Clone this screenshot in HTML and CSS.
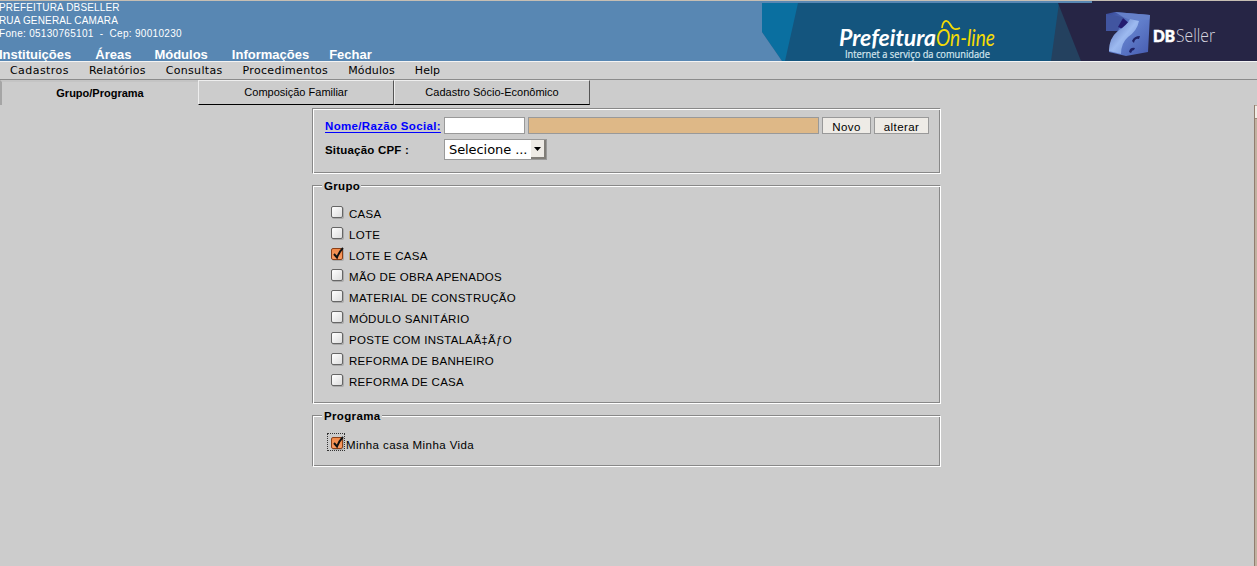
FILE: index.html
```html
<!DOCTYPE html>
<html lang="pt-BR">
<head>
<meta charset="utf-8">
<title>Prefeitura On-line</title>
<link rel="stylesheet" href="styles.css">
</head>
<body>
<header class="top">
  <div class="top-left">
    <div class="org"><span class="org-a">PREFEITURA DBSELLER</span><br><span class="org-b">RUA GENERAL CAMARA</span><br><span class="org-c">Fone: 05130765101 &nbsp;- &nbsp;Cep: 90010230</span></div>
    <nav class="main-nav"><a>Instituições</a><a class="areas">Áreas</a><a>Módulos</a><a>Informações</a><a class="fechar">Fechar</a></nav>
  </div>
  <svg class="banner" width="495" height="60" viewBox="762 1 495 60">
    <defs>
      <linearGradient id="cube" x1="0" y1="0" x2="1" y2="1"><stop offset="0" stop-color="#354596"/><stop offset=".45" stop-color="#6482ce"/><stop offset="1" stop-color="#465bb0"/></linearGradient>
      <linearGradient id="ribbon" x1="0" y1="0" x2="1" y2="1"><stop offset="0" stop-color="#5269b4"/><stop offset=".5" stop-color="#9dbaf0"/><stop offset="1" stop-color="#6f8cd4"/></linearGradient>
    </defs>
    <rect x="762" y="1" width="495" height="60" fill="#14557e"/>
    <path d="M762 3H798L785 61H782L762 32Z" fill="#0a6fa0"/>
    <path d="M762 32L782 61H762Z" fill="#5887b3"/>
    <path d="M1059 3L1051 61H1082V3Z" fill="#24415f"/>
    <path d="M1058 3H1257V61H1081Z" fill="#262545"/>
    <rect x="762" y="1" width="330" height="2" fill="#5887b3"/>
    <rect x="1092" y="1" width="165" height="2" fill="#262545"/>
    <text class="pref" x="839" y="46" textLength="97" lengthAdjust="spacingAndGlyphs">Prefeitura</text>
    <text class="online" x="936" y="46" textLength="59" lengthAdjust="spacingAndGlyphs">On-line</text>
    <path d="M942 28C943 20 947 19 950 24C953 30 956 30 960 28" fill="none" stroke="#f5dc05" stroke-width="1.7"/>
    <text class="slogan" x="845" y="58" textLength="145" lengthAdjust="spacingAndGlyphs">Internet a serviço da comunidade</text>
    <path d="M1106 14L1115 12L1150 15L1148 52L1126 56L1109 52Q1110 38 1118 31H1106Z" fill="url(#cube)"/>
    <path d="M1106 14L1123 17L1118 31H1106Z" fill="#4155a0"/>
    <path d="M1115 12L1150 15L1149 20L1128 19L1123 17Z" fill="#6580c9"/>
    <path d="M1123 18L1130 24L1125 30L1118 27Z" fill="#241c70"/>
    <path d="M1118 31Q1128 24 1130 19L1139 21Q1137 31 1128 37Q1121 43 1121 54L1109 51Q1109 38 1118 31Z" fill="url(#ribbon)"/>
    <path d="M1132 41Q1134 36 1140 36L1139 39Q1135 38 1134 43ZM1129 52Q1130 47 1135 48L1134 50Q1132 50 1131 53Z" fill="#202367"/>
    <text class="db" x="1153" y="42" textLength="22" lengthAdjust="spacingAndGlyphs">DB</text>
    <text class="seller" x="1176" y="42" textLength="39" lengthAdjust="spacingAndGlyphs">Seller</text>
  </svg>
</header>
<nav class="menu"><a class="m1">Cadastros</a><a class="m2">Relatórios</a><a class="m3">Consultas</a><a class="m4">Procedimentos</a><a class="m5">Módulos</a><a>Help</a></nav>
<div class="tabs">
  <div class="tab active"><span>Grupo/Programa</span></div>
  <div class="tab"><span>Composição Familiar</span></div>
  <div class="tab"><span>Cadastro Sócio-Econômico</span></div>
</div>
<div class="scroll"><i></i></div>
<main class="form">
  <section class="box person">
    <div class="line"><a class="lbl link"><span>Nome/Razão Social:</span></a><input class="code"><input class="name"><button class="btn novo">Novo</button><button class="btn alterar">alterar</button></div>
    <div class="line second"><span class="lbl cpf"><span>Situação CPF :</span></span><div class="select"><span>Selecione ...</span><b><svg width="7" height="4" viewBox="0 0 7 4"><path d="M0 0H7L3.5 4Z"/></svg></b></div></div>
  </section>
  <section class="box grupo">
    <h2 class="title">Grupo</h2>
    <label class="row"><i class="chk"></i><span>CASA</span></label>
    <label class="row"><i class="chk"></i><span>LOTE</span></label>
    <label class="row"><i class="chk on"><svg width="13" height="14" viewBox="0 0 13 14"><path d="M3 7L6 10.500Q8 5 12 1"/></svg></i><span>LOTE E CASA</span></label>
    <label class="row"><i class="chk"></i><span>MÃO DE OBRA APENADOS</span></label>
    <label class="row"><i class="chk"></i><span>MATERIAL DE CONSTRUÇÃO</span></label>
    <label class="row"><i class="chk"></i><span>MÓDULO SANITÁRIO</span></label>
    <label class="row"><i class="chk"></i><span>POSTE COM INSTALAÃ‡ÃƒO</span></label>
    <label class="row"><i class="chk"></i><span>REFORMA DE BANHEIRO</span></label>
    <label class="row"><i class="chk"></i><span>REFORMA DE CASA</span></label>
  </section>
  <section class="box programa">
    <h2 class="title">Programa</h2>
    <label class="row vida"><em><i class="chk on"><svg width="13" height="14" viewBox="0 0 13 14"><path d="M3 7L6 10.500Q8 5 12 1"/></svg></i></em><span>Minha casa Minha Vida</span></label>
  </section>
</main>
</body>
</html>
```
FILE: styles.css
```css
* { box-sizing: border-box; }
body { margin: 0; height: 566px; overflow: hidden; background: #ccc; color: #000; font: 11px/13px "Liberation Sans", Arial, sans-serif; position: relative; }
.top { height: 62px; display: flex; justify-content: space-between; background: #5887b3; border-top: 1px solid #c6beb3; border-bottom: 1px solid #f4f4f4; color: #fff; }
.top-left { margin-left: -1px; }
.org { height: 39px; font-size: 10px; line-height: 13px; white-space: nowrap; letter-spacing: .15px; }
.org-c { letter-spacing: .3px; }
.main-nav { display: flex; gap: 24px; margin-top: 7px; font-size: 13px; line-height: 16px; font-weight: bold; }
.areas { margin-right: -1px; }
.fechar { margin-left: -4px; }
.banner { display: block; flex: none; }
.pref { font: italic bold 23px Lato, sans-serif; fill: #fff; }
.online { font: italic 23px Lato, sans-serif; fill: #f5dc05; }
.slogan { font: 10px "Open Sans", sans-serif; fill: #d8e8f0; stroke: #d8e8f0; stroke-width: .2px; }
.db { font: 900 17px Lato, sans-serif; fill: #fff; stroke: #fff; stroke-width: .6px; }
.seller { font: 300 18px "Open Sans", sans-serif; fill: #d5d4df; }
.menu { height: 18px; display: flex; gap: 20px; padding-left: 10px; background: #d0d0d0; border-bottom: 1px solid #8b8b8b; font: 11px/18px "DejaVu Sans", sans-serif; }
.m1 { letter-spacing: .44px; }
.m2 { letter-spacing: .2px; }
.m3 { letter-spacing: .33px; }
.m4 { letter-spacing: .31px; }
.m5 { letter-spacing: .14px; }
.tabs { height: 25px; display: flex; }
.tab { width: 196px; height: 25px; border: solid; border-width: 1px 1px 1px 1px; border-color: #eee #555 #000 #eee; text-align: center; line-height: 22px; }
.tab.active { width: 198px; border-color: #c4c4c4 #ccc #ccc #a5a5a5; border-width: 2px 0 0 2px; font-weight: bold; }
.scroll { position: absolute; right: 0; top: 105px; width: 3px; height: 461px; background: #c1b1a0; border-left: 1px solid #917e70; }
.scroll i { display: block; height: 14px; background: #f0ece5; border-bottom: 1px solid #9b8877; border-top: 1px solid #b8a898; }
.form { width: 629px; margin: 3px 0 0 312px; font-size: 11.5px; }
.box { position: relative; border: 1px solid #888; border-right-color: #fff; border-bottom-color: #fff; box-shadow: inset 1px 1px #fff, inset -1px -1px #888; }
.person { height: 66px; padding: 8px 0 0 12px; }
.line { display: flex; height: 17px; }
.second { height: 21px; margin-top: 5px; }
.lbl { width: 119px; font-weight: bold; white-space: nowrap; }
.link { color: #00f; line-height: 18px; letter-spacing: .33px; }
.link span { text-decoration: underline; text-underline-offset: 2px; }
.cpf { line-height: 22px; letter-spacing: .2px; }
.code, .name { border: 1px solid #999; height: 17px; padding: 0; border-radius: 0; background: #fff; width: 81px; margin: 0 3px 0 0; }
.name { background: #deb887; width: 291px; }
.btn { height: 17px; border: 1px solid #999; background: #eeebe6; padding: 3px 0 0; font: inherit; width: 49px; margin: 0 3px 0 0; line-height: 13px; letter-spacing: .4px; }
.alterar { width: 55px; }
.select { width: 103px; height: 21px; border: 1px solid #999; background: #fff; display: flex; justify-content: space-between; padding: 0 0 0 4px; font: 13px/19px "DejaVu Sans", sans-serif; letter-spacing: -.08px; }
.select b { width: 15px; background: #eeebe6; border: solid #817e79; border-width: 0 2px 2px 0; display: flex; align-items: center; justify-content: center; }
.grupo { height: 219px; margin-top: 11px; padding: 18px 0 0 18px; }
.title { position: absolute; left: 9px; top: -6px; margin: 0; padding: 0 1px 0 2px; background: #ccc; font-size: 11.5px; line-height: 13px; letter-spacing: .35px; }
.row { display: flex; height: 21px; align-items: flex-start; line-height: 13px; white-space: nowrap; padding-top: 2px; letter-spacing: .3px; }
.row span { margin-top: 2px; }
.chk { display: block; width: 12px; height: 12px; flex: none; margin-right: 6px; border: 1px solid #666; border-radius: 2px; background: linear-gradient(135deg, #fff, #ddd); box-shadow: 1px 1px #aaa; }
.on { background: linear-gradient(#f08a49, #fa9c63); border-color: #8b3f16; }
.on svg { display: block; margin: -2px 0 0 -1px; overflow: visible; }
.on path { fill: none; stroke: #111; stroke-width: 2; }
.programa { height: 52px; margin-top: 11px; padding: 17px 0 0 14px; }
.vida { padding: 0; letter-spacing: .42px; }
.vida em { flex: none; width: 18px; height: 18px; border: 1px dotted #333; padding: 3px 0 0 3px; }
.vida .chk { margin: 0; }
.vida span { margin: 6px 0 0 1px; }
```
